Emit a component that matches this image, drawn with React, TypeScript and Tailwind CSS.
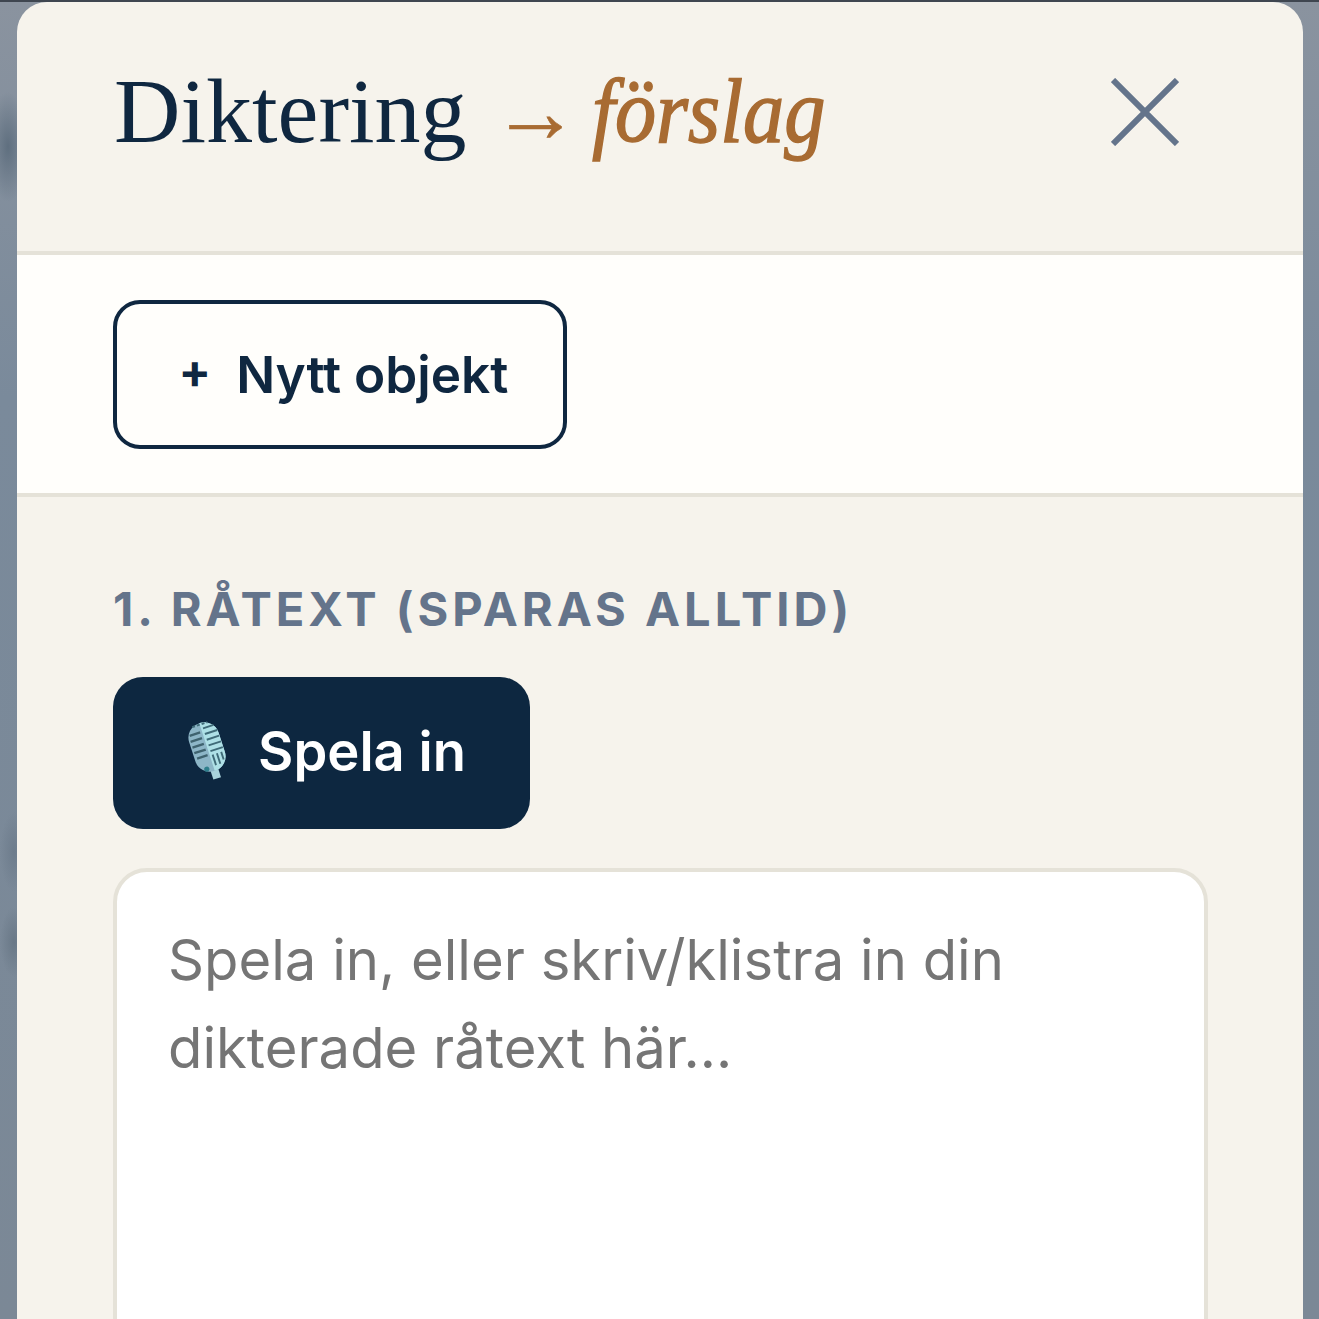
import React from 'react'

const MicIcon = () => (
  <svg width="42" height="62" viewBox="13 12 42 62" className="shrink-0">
    <defs>
      <clipPath id="mic-right">
        <rect x="33" y="10" width="18" height="56" />
      </clipPath>
    </defs>
    <g transform="rotate(-18 33 38)">
      <rect x="29" y="60" width="8" height="11" fill="#a9d3dc" />
      <rect x="17.5" y="13" width="31" height="50" rx="15" fill="#8db6c7" />
      <rect x="17.5" y="13" width="31" height="50" rx="15" fill="#aee0e6" clipPath="url(#mic-right)" />
      <path d="M25 14.5h16" stroke="#3f6b78" strokeWidth="2" strokeDasharray="3 2" />
      <path d="M20 22h11M19 28h12M19 34h12M19 40h12M20 46h11" stroke="#3f636f" strokeWidth="2.4" />
      <path d="M35 19h11M35 25h13M35 31h13M35 37h13M35 43h13" stroke="#3f6b78" strokeWidth="1.9" />
      <path d="M36 47v11M40.5 47v11M45 47v8" stroke="#3f6b78" strokeWidth="1.9" />
      <circle cx="26" cy="59" r="2.6" fill="#2f7f8c" />
    </g>
  </svg>
)

export default function App() {
  return (
    <div className="h-[1319px] overflow-hidden bg-[radial-gradient(ellipse_20px_55px_at_8px_145px,#5f6f7f,transparent),radial-gradient(ellipse_14px_40px_at_14px_850px,#6d7c8c,transparent),radial-gradient(ellipse_14px_35px_at_14px_940px,#697887,transparent),linear-gradient(180deg,#8a939f,#7a8a9b_30%,#7b8896)] border-t-2 border-[#3f4650] pl-[17px] pr-[16px] font-['Inter',sans-serif]">
      <div className="h-[1400px] rounded-t-[30px] bg-[#f6f3ec]">
        {/* Header */}
        <div className="h-[253px] border-b-4 border-[#e5e2d8] pl-[97px] pr-[124px] flex items-start justify-between">
          <h1 className="pt-[54px] flex items-baseline font-['Liberation_Serif',serif] text-[92px] leading-[110px] font-normal text-[#0f2740] whitespace-nowrap">
            <span>Diktering</span>
            <span className="ml-[25px] text-[#a86b32] text-[88px] leading-none [-webkit-text-stroke:0.6px_#a86b32]">→</span>
            <em className="ml-[12px] inline-block origin-left scale-x-[0.915] text-[#a86b32] text-[90px] [-webkit-text-stroke:1.5px_#a86b32]">förslag</em>
          </h1>
          <button className="mt-[76px]">
            <svg width="68" height="68" viewBox="0 0 68 68" fill="none" stroke="#64748b" strokeWidth="6">
              <path d="M2 2L66 66M66 2L2 66" />
            </svg>
          </button>
        </div>

        {/* New object */}
        <div className="h-[242px] border-b-4 border-[#e5e2d8] bg-[#fffefb] pl-[96px] pt-[45px]">
          <button className="w-[454px] h-[149px] pl-[7px] pb-[1px] rounded-[27px] border-4 border-[#0f2740] flex items-center justify-center gap-[25px] text-[#0f2740] text-[51.3px] font-semibold">
            <span className="text-[48px] font-bold mb-[6px]">+</span>
            <span>Nytt objekt</span>
          </button>
        </div>

        {/* Raw text */}
        <div className="pl-[96px] pr-[95px] pt-[80px]">
          <div className="text-[#64748b] text-[47px] leading-[64px] font-bold tracking-[4px] whitespace-nowrap">
            1. RÅTEXT (SPARAS ALLTID)
          </div>
          <button className="mt-[36px] w-[417px] h-[152px] pl-[10px] pb-[2px] rounded-[30px] bg-[#0d2740] flex items-center justify-center gap-[29px] text-white text-[54.3px] font-semibold">
            <MicIcon />
            <span>Spela in</span>
          </button>
          <div className="mt-[39px] h-[600px] rounded-[34px] border-4 border-[#e5e2d8] bg-white pl-[51px] pr-[52px] pt-[44px] text-[#757575] text-[56.2px] leading-[88px]">
            Spela in, eller skriv/klistra in din
            <br />
            dikterade råtext här...
          </div>
        </div>
      </div>
    </div>
  )
}
